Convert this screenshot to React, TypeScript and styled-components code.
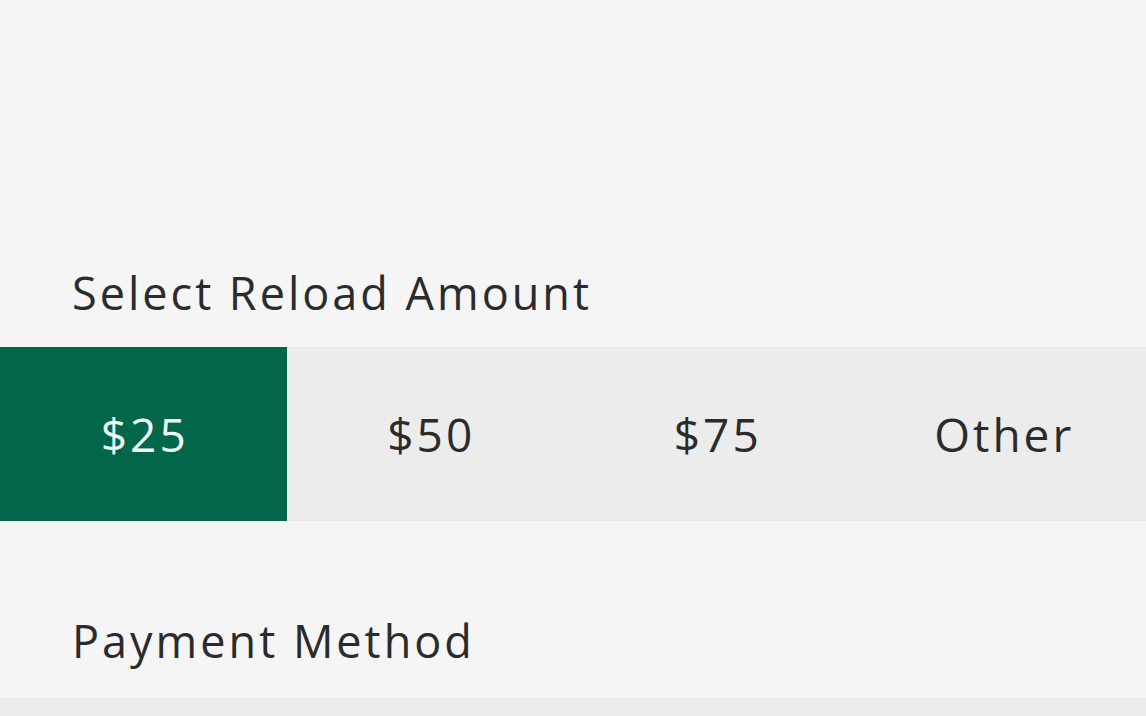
import { useState } from "react";
import styled, { createGlobalStyle } from "styled-components";

const GlobalStyle = createGlobalStyle`
  html, body {
    margin: 0;
    padding: 0;
    background: #f5f5f5;
  }
  body {
    font-family: "Open Sans", "Noto Sans", sans-serif;
    color: #2b2b2b;
    overflow: hidden;
  }
`;

const AMOUNTS = ["$25", "$50", "$75", "Other"];

export default function App() {
  const [selected, setSelected] = useState(0);

  return (
    <>
      <GlobalStyle />
      <Page>
        <Section>
          <Label>Select Reload Amount</Label>
          <AmountBar role="radiogroup" aria-label="Reload amount">
            {AMOUNTS.map((amount, i) => (
              <AmountButton
                key={amount}
                role="radio"
                aria-checked={selected === i}
                $active={selected === i}
                onClick={() => setSelected(i)}
              >
                {amount}
              </AmountButton>
            ))}
          </AmountBar>
        </Section>

        <PaymentSection>
          <Label>Payment Method</Label>
          <PaymentCard />
        </PaymentSection>
      </Page>
    </>
  );
}

const Page = styled.main`
  display: flex;
  flex-direction: column;
  height: 716px;
  padding-top: 262px;
  box-sizing: border-box;
`;

const Section = styled.section`
  display: flex;
  flex-direction: column;
`;

const Label = styled.h2`
  margin: 0;
  padding: 0 0 0 72px;
  font-size: 45px;
  font-weight: 400;
  line-height: 62px;
  letter-spacing: 3px;
  color: #2b2b2b;
`;

const AmountBar = styled.div`
  display: grid;
  grid-template-columns: repeat(4, 1fr);
  height: 174px;
  margin-top: 23px;
  background: #ececec;
`;

const AmountButton = styled.button<{ $active: boolean }>`
  border: 0;
  margin: 0;
  padding: 0 0 0 3px;
  font-family: inherit;
  font-size: 46px;
  font-weight: 400;
  letter-spacing: 3px;
  cursor: pointer;
  background: ${({ $active }) => ($active ? "#02664a" : "transparent")};
  color: ${({ $active }) => ($active ? "#eef8f2" : "#2b2b2b")};
`;

const PaymentSection = styled.section`
  display: flex;
  flex-direction: column;
  flex: 1;
  margin-top: 89px;
`;

const PaymentCard = styled.div`
  flex: 1;
  margin-top: 26px;
  background: #ebebeb;
`;
